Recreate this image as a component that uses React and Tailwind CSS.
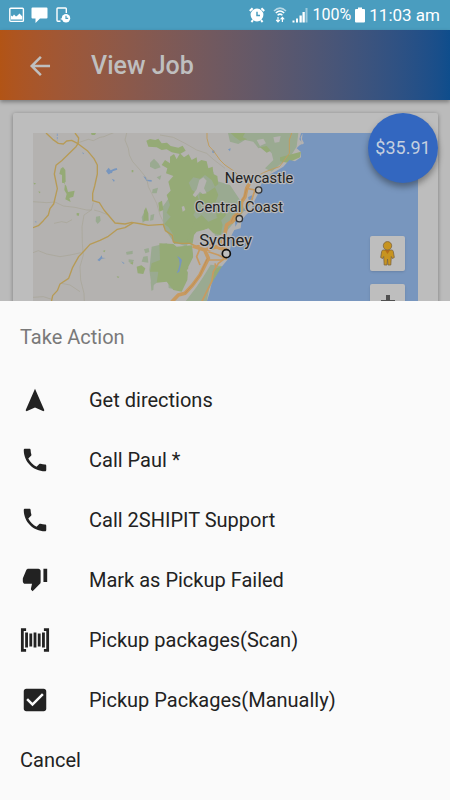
import React from "react";
import {
  IoMdArrowBack,
  IoMdBarcode,
  IoMdCall,
  IoMdCheckbox,
  IoMdNavigate,
  IoMdThumbsDown,
} from "react-icons/io";

const actions = [
  { label: "Get directions", icon: IoMdNavigate },
  { label: "Call Paul *", icon: IoMdCall },
  { label: "Call 2SHIPIT Support", icon: IoMdCall },
  { label: "Mark as Pickup Failed", icon: IoMdThumbsDown },
  { label: "Pickup packages(Scan)", icon: IoMdBarcode },
  { label: "Pickup Packages(Manually)", icon: IoMdCheckbox },
];

const StatusBar = () => (
  <div className="flex h-[30px] shrink-0 items-center justify-between bg-[#4a9dbf] pl-2 pr-[10px] text-white">
    <div className="flex items-center gap-[6px]">
      <svg className="h-4 w-[17px]" viewBox="0 0 17 16" fill="none">
        <rect x="1.8" y="1.2" width="13.6" height="13.2" rx="1" stroke="white" strokeWidth="1.4" />
        <path d="M3 12.5V8.5L4.5 9.5L6 7.5L8 9.5L9.5 8.5L11.5 6.5L14.3 9.5V12.5Z" fill="white" />
      </svg>
      <svg className="h-4 w-[17px]" viewBox="0 0 17 16" fill="white">
        <path d="M1.5 0.5H15.5Q16.5 0.5 16.5 1.5V10.5Q16.5 11.5 15.5 11.5H9L4.5 16V11.5H1.5Q0.5 11.5 0.5 10.5V1.5Q0.5 0.5 1.5 0.5Z" />
      </svg>
      <svg className="h-4 w-[17px]" viewBox="0 0 17 16" fill="none">
        <path d="M12.3 6V1.8Q12.3 1 11.5 1H3.8Q3 1 3 1.8V13.2Q3 14.2 3.8 14.2H6.5" stroke="white" strokeWidth="1.4" />
        <circle cx="7.3" cy="12" r="0.7" fill="white" />
        <circle cx="12" cy="11.2" r="4.2" fill="white" />
        <path d="M12 8.8V11.4H14.2" stroke="#4a9dbf" strokeWidth="1.2" />
      </svg>
    </div>
    <div className="flex items-center text-[17px] leading-5">
      <svg className="mr-2 h-4 w-4" viewBox="0 0 16 16" fill="none" stroke="white">
        <circle cx="8" cy="8" r="6.4" fill="white" stroke="none" />
        <path d="M8 4.8V8.6H11" stroke="#4a9dbf" strokeWidth="1.5" />
        <path d="M0.8 4L3.6 1.2M15.2 4L12.4 1.2M2.4 15L4 13.2M13.6 15L12 13.2" strokeWidth="2" />
      </svg>
      <svg className="mr-[5px] h-4 w-[14px]" viewBox="0 0 14 16" fill="none" stroke="white" strokeWidth="1.5">
        <path d="M1 4Q7 -1.8 13 4" opacity="0.6" />
        <path d="M2.8 6Q7 2 11.2 6M4.6 8.2Q7 6 9.4 8.2" />
        <path d="M5 10V14.5M3.2 12.8L5 14.8L6.8 12.8M9.4 15V10.8M7.6 12.4L9.4 10.4L11.2 12.4" strokeWidth="1.2" />
      </svg>
      <svg className="mr-[5px] h-4 w-4" viewBox="0 0 16 16" fill="white">
        <path d="M0.5 13.5H2.5V15.5H0.5ZM4 11.5H6V15.5H4ZM7.5 8.5H9.8V15.5H7.5ZM10.5 5H12.8V15.5H10.5Z" />
        <path d="M13.5 1H15.5V15.5H13.5Z" opacity="0.45" />
      </svg>
      <span className="text-base">100%</span>
      <svg className="mx-1 h-4 w-[10px]" viewBox="0 0 10 16" fill="white">
        <path d="M3 0.5H7V2H9Q10 2 10 3V14.5Q10 15.5 9 15.5H1Q0 15.5 0 14.5V3Q0 2 1 2H3Z" />
      </svg>
      <span>11:03 am</span>
    </div>
  </div>
);

const MapDrawing = () => (
  <svg
    className="block h-[300px] w-full"
    viewBox="99 99 1155 900"
    preserveAspectRatio="xMinYMin slice"
    fill="none"
    role="img"
    aria-label="Map of Sydney"
  >
    <rect x="99" y="99" width="1155" height="900" fill="#b4b2b0" />

    {/* bushland */}
    <g fill="#9aaa91">
      <path d="M450 188L462 176L475 190L482 202L465 208L450 200Z" />
      <path d="M600 190L640 215L655 270L675 300L678 390L650 400L630 370L580 380L560 440L520 425L490 380L488 320L560 220Z" />
      <path d="M640 240L690 255L720 300L735 330L700 370L675 400L645 410L630 300Z" />
      <path d="M684 99H895L890 140L868 175L838 195L815 215L795 205L820 180L815 160L795 140L775 145L760 125L735 120L715 132L690 125Z" />
      <path d="M455 440L500 430L520 450L505 490L480 540L455 560L448 510Z" />
      <path d="M632 494L665 498L645 530L628 565L620 606H555L590 560L610 530Z" />
      <path d="M288 350L300 348L302 362L293 372L287 364ZM458 268L474 263L470 280L456 280ZM430 470L443 468L445 488L425 485ZM425 352L432 338L436 362L428 368ZM452 345L463 342L460 360L450 362Z" />
      <path d="M378 456L398 452V462L380 464ZM386 478L402 480L398 488L386 486ZM432 448L446 444L448 456L436 460ZM452 545L462 540L460 570L454 572ZM505 545L518 540L516 566L506 564ZM470 232L484 226L480 240Z" />
    </g>
    <g fill="#95aa76">
      <path d="M439 122L450 117L466 120L475 116L485 130L501 128L512 138L535 143L548 137L557 152L540 162L515 157L500 148L485 150L470 142L445 140Z" />
      <path d="M510 170L522 162L530 178L540 160L552 172L566 163L575 180L590 172L592 188L604 180L620 184L625 205L638 200L640 222L652 228L655 252L645 260L635 240L615 225L600 236L580 232L566 248L576 270L590 280L600 310L580 345L600 370L588 390L578 432L550 428L522 432L520 405L506 382L493 372L512 350L500 338L510 315L500 285L512 272L505 245L520 228L498 220L502 205L485 195L495 180L510 190Z" />
      <path d="M585 360L605 345L625 365L660 350L668 375L662 405L640 400L625 385L600 395L580 430L560 425Z" />
      <path d="M598 282L625 275L645 262L655 285L645 310L622 318L600 312Z" />
      <path d="M478 430L520 432L530 440L576 436L580 470L565 500L562 540L545 575L520 570L500 545L470 548L475 515L450 515L455 490L480 480Z" />
      <path d="M410 500L424 496L436 505L430 522L413 520ZM432 332L438 322L445 340L446 362L430 362ZM475 308L486 302L490 330L478 335ZM182 206L189 201L196 210L197 245L192 250L199 258L204 276L224 272L220 290L208 294L212 306L196 298L200 282L193 270L195 250L186 248L186 225L178 222Z" />
      <path d="M273 99H288L285 105H275ZM115 274L122 276L118 280ZM230 339L238 340L236 348L230 346ZM100 248L108 250L104 254ZM395 210H400V217H395ZM388 488L400 486L398 494ZM350 529L358 530L354 535ZM308 453L316 450L314 457Z" />
      <path d="M692 99H735L728 112L742 118L720 122L705 112ZM840 172L903 155L900 172L875 183L862 188L840 184ZM648 330L670 325L678 345L665 360L650 352ZM780 142L800 138L812 152L800 158Z" />
      <path d="M645 506L668 498L665 515L650 527L640 545L632 552Z" />
    </g>
    <g fill="#b4b2b0">
      <path d="M578 285L590 268L598 240L610 232L620 242L612 265L620 280L608 282L600 275L586 292Z" />
      <path d="M590 395L620 388L650 415L670 440L640 480L610 520L590 540L560 560L572 530L580 470L578 430L582 405Z" />
      <path d="M545 320L552 318L556 330L548 335ZM770 120L790 116L798 130L780 138ZM820 112L842 108L838 126L824 128ZM560 510L575 500L570 530Z" />
    </g>

    {/* ocean */}
    <path
      d="M903 99L898 118L908 130L897 137L890 145L903 156L903 172L885 184L868 180L850 200L830 212L812 222L800 238L788 242L780 262L775 280L762 305L753 330L738 345L725 360L722 385L703 390L695 405L690 420L692 440L687 460L682 480L665 500L650 525L635 550L628 580L620 606L600 700L560 820L520 999H1254V99Z"
      fill="#7896be"
    />
    <path d="M902 112L908 100L906 118L912 130L905 134Z" fill="#b4b2b0" />
    <g fill="#7896be">
      <path d="M318 213L326 203L332 211L342 206L350 204L352 209L338 214L336 219L324 221ZM321 210L330 222L324 223ZM335 236L344 240L342 246ZM430 229L437 231L440 239L455 240V245L440 243ZM292 480L300 473L305 466L307 473L318 474L305 476L298 484ZM364 484L374 490L370 491ZM531 468L540 473L546 480L542 498L538 515L530 520L535 508L539 492L537 478Z" />
      <path d="M636 152L642 150L645 158L638 159ZM684 148L692 145L690 154ZM246 157L252 160L250 163ZM104 364L110 365L108 368ZM727 330L742 320L738 334ZM744 292L755 286L760 296L748 306ZM705 360L715 355L712 370L706 380Z" />
      <path d="M172 101V122" stroke="#6f96c8" strokeWidth="2" strokeDasharray="7 3" />
    </g>

    {/* minor roads */}
    <g stroke="#a8a495" strokeWidth="2">
      <path d="M235 128L265 118L280 122L300 112L312 110L330 102L340 99M380 99L375 120L385 145L388 165L398 185L420 210L440 235L445 260L455 280L470 310L480 345L492 370" />
      <path d="M99 305L140 308L165 306L190 318L225 322L260 330L275 330M280 308L274 330L252 345L246 380L247 430L250 465L240 500L242 540L252 580L253 606M282 330L300 335L325 345" />
      <path d="M99 458L115 452L140 462L180 470L205 466L225 462L242 458M162 370L185 365L200 368L216 359M184 550L210 555L240 575M480 105L520 112L555 130L590 150L620 160L640 178L675 205M99 592L130 590L155 598" />
    </g>

    {/* main roads */}
    <g stroke="#b79b56" strokeWidth="4" strokeLinejoin="round">
      <path d="M138 99L158 118L175 130L190 132L200 123L215 121L234 131L228 140L185 182L168 196L163 222L172 266L161 312L150 326L145 345L130 362L115 377L99 383" />
      <path d="M225 99L236 114L234 131L262 152L282 176L292 195V222L284 258L278 280V302L298 308L312 330L345 369L375 372L395 367L425 372L445 376L490 373L496 392L517 406L520 426L540 430L570 430L585 438" />
      <path d="M400 368L375 383L352 388L325 409L300 421L270 433L252 453L236 470L218 502L206 535L180 552L172 572L158 587L154 606" />
      <path d="M621 99V115L627 138L640 152L660 180L675 195L700 212L715 226L735 235M875 99L868 120L868 160L850 185L838 200L815 208L790 218L770 230L745 240" strokeWidth="3" stroke="#c09d60" />
    </g>

    {/* motorways */}
    <g stroke="#c89a60" strokeLinejoin="round">
      <path d="M748 250L740 265L735 290L725 305L722 335L702 350L694 365L680 375L675 400L660 430M578 438L615 450L650 440L680 450M615 452L625 475L600 525L578 555L555 580L535 585L515 606" strokeWidth="11" />
      <path d="M600 445L590 470L600 495M620 480H665L680 470M675 475L655 490L640 515L635 545L620 575L605 606M625 455L655 465L680 478M590 438L625 432L660 448M645 490L648 505M740 265L765 270L755 300L735 330M695 370L715 352" strokeWidth="5" />
      <path d="M740 265L733 290L724 305L720 335L700 350L694 365M622 475L600 525L578 555L555 580" stroke="#b98b53" strokeWidth="2" />
    </g>

    {/* places */}
    <g fill="#bebebe" stroke="#333333">
      <circle cx="776" cy="270" r="9.5" strokeWidth="4" />
      <circle cx="718" cy="356" r="9.5" strokeWidth="4" />
      <circle cx="679" cy="461" r="12" stroke="#111111" strokeWidth="5" />
    </g>
    <g
      fill="#222222"
      stroke="#b9b9b9"
      strokeWidth="7"
      strokeLinejoin="round"
      paintOrder="stroke"
      textAnchor="middle"
      fontSize="44"
    >
      <text x="777" y="248">Newcastle</text>
      <text x="717" y="335">Central Coast</text>
      <text x="677" y="438" fontSize="50">Sydney</text>
    </g>
  </svg>
);

const JobMap = () => (
  <div className="relative">
    <MapDrawing />
    <div className="absolute right-[13px] top-[103px] flex flex-col gap-[13px]">
      <button
        aria-label="Street View"
        className="flex h-[35px] w-[35px] items-center justify-center rounded-xs bg-[#bebebe] shadow"
      >
        <svg className="h-[25px] w-[15px]" viewBox="0 0 15 25" stroke="#7c6540" strokeWidth="0.8">
          <path d="M3.2 9H11.8Q13 9 13.3 10.5L14.3 16.5L12.3 17.5L11.3 15.5L10.8 24H8L7.5 18L7 24H4.2L3.7 15.5L2.7 17.5L0.7 16.5L1.7 10.5Q2 9 3.2 9Z" fill="#c79420" />
          <path d="M4.8 9H10.2L7.5 13Z" fill="#b56d18" stroke="none" />
          <circle cx="7.5" cy="4.8" r="4.2" fill="#c79420" />
        </svg>
      </button>
      <button
        aria-label="Zoom in"
        className="flex h-[35px] w-[35px] items-center justify-center rounded-xs bg-[#bebebe] shadow"
      >
        <svg className="h-[14px] w-[14px]" viewBox="0 0 14 14" stroke="#505050" strokeWidth="4">
          <path d="M7 0V14M0 7H14" />
        </svg>
      </button>
    </div>
  </div>
);

const ActionSheet = () => (
  <section className="shrink-0 bg-[#fafafa] pb-[10px] text-xl text-[#222222]">
    <h2 className="px-5 pb-[21px] pt-6 leading-6 text-[#797979]">Take Action</h2>
    {actions.map(({ label, icon: Icon }) => (
      <button key={label} className="flex h-[60px] w-full items-center gap-[39px] px-5 text-left">
        <Icon className="h-[30px] w-[30px] shrink-0" />
        {label}
      </button>
    ))}
    <button className="flex h-[60px] w-full items-center px-5 text-left">Cancel</button>
  </section>
);

const App = () => {
  return (
    <div className="flex h-screen flex-col overflow-hidden bg-[#bbbbbb] font-['Roboto',sans-serif]">
      <StatusBar />
      <header className="z-10 flex h-[70px] shrink-0 items-center gap-9 bg-linear-to-r from-[#b25415] to-[#0e4d8c] px-[25px] pt-[2px] text-[#bfbfbf] shadow-[0_2px_4px_rgba(0,0,0,0.35)]">
        <button aria-label="Back">
          <IoMdArrowBack className="h-[30px] w-[30px]" />
        </button>
        <h1 className="text-[25px] font-medium leading-8">View Job</h1>
      </header>
      <main className="min-h-0 flex-1 overflow-hidden pl-[13px] pr-3 pt-[13px]">
        <div className="relative rounded-xs bg-[#bdbdbd] p-5 shadow-[0_1px_4px_rgba(0,0,0,0.35)]">
          <JobMap />
          <div className="absolute right-0 top-0 flex h-[70px] w-[70px] items-center justify-center rounded-full bg-[#3367c0] text-lg text-[#c4cfdf] shadow-[0_4px_6px_rgba(0,0,0,0.35)]">
            $35.91
          </div>
        </div>
      </main>
      <ActionSheet />
    </div>
  );
};

export default App;
